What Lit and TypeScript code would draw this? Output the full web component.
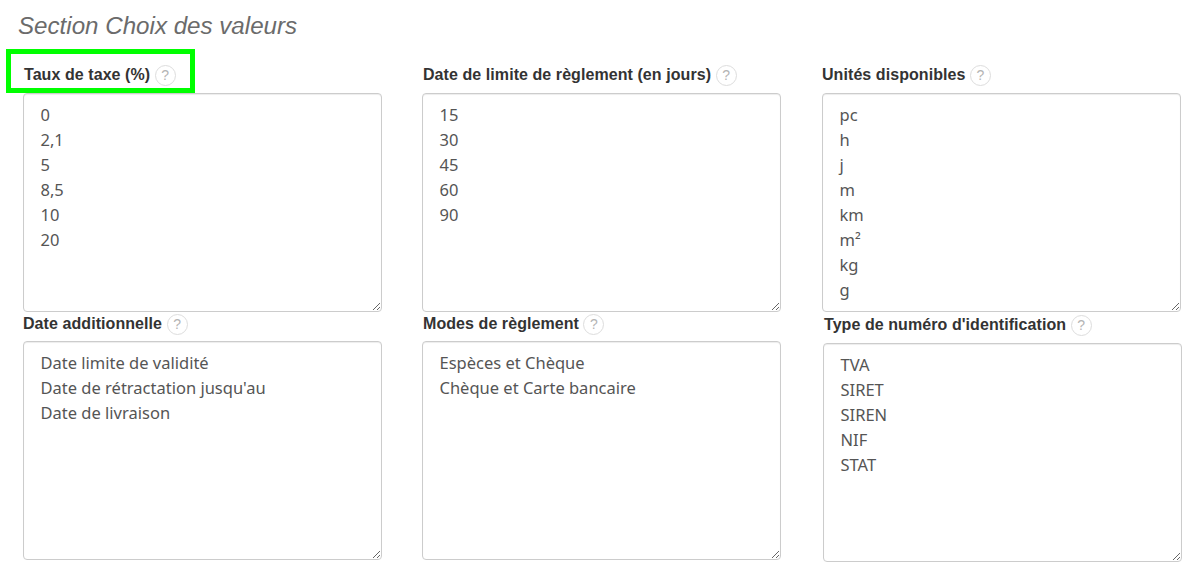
import { LitElement, html, css } from "lit";
import { customElement } from "lit/decorators.js";

const CELLS = [
  { label: "Taux de taxe (%)", value: "0\n2,1\n5\n8,5\n10\n20", cls: "c1" },
  { label: "Date de limite de règlement (en jours)", value: "15\n30\n45\n60\n90", cls: "c2" },
  { label: "Unités disponibles", value: "pc\nh\nj\nm\nkm\nm²\nkg\ng", cls: "c3" },
  { label: "Date additionnelle", value: "Date limite de validité\nDate de rétractation jusqu'au\nDate de livraison", cls: "c4" },
  { label: "Modes de règlement", value: "Espèces et Chèque\nChèque et Carte bancaire", cls: "c5" },
  { label: "Type de numéro d'identification", value: "TVA\nSIRET\nSIREN\nNIF\nSTAT", cls: "c6" },
];

@customElement("app-root")
export class AppRoot extends LitElement {
  static styles = css`
    :host {
      display: block;
      position: relative;
      width: 1200px;
      height: 573px;
      overflow: hidden;
      background: #fff;
      font-family: "Liberation Sans", Arial, sans-serif;
    }
    .page {
      padding: 13px 0 0 18px;
    }
    h2 {
      margin: 0;
      font-size: 24.15px;
      line-height: 26px;
      font-weight: 400;
      font-style: italic;
      color: #6b6b6b;
    }
    .grid {
      display: grid;
      grid-template-columns: 399px 400px 360px;
      grid-template-rows: 248px auto;
      margin: 25px 0 0 5px;
    }
    .cell {
      display: flex;
      flex-direction: column;
      gap: 7px;
      align-items: flex-start;
    }
    .head {
      display: flex;
      align-items: center;
      gap: 4.5px;
      height: 22px;
      font-size: 16px;
      letter-spacing: 0.07px;
      font-weight: 700;
      color: #333;
      white-space: nowrap;
    }
    .c1 .head,
    .c2 .head,
    .c5 .head {
      padding-left: 1px;
    }
    .c4 .head,
    .c5 .head {
      margin-top: 1px;
      margin-bottom: -1px;
    }
    .c6 {
      padding: 2px 0 0 1px;
    }
    .c6 .head {
      padding-left: 1px;
    }
    .help {
      box-sizing: border-box;
      width: 21px;
      height: 21px;
      border: 1px solid #ddd;
      border-radius: 50%;
      display: flex;
      align-items: center;
      justify-content: center;
      font-size: 14px;
      font-weight: 400;
      color: #b4b4b4;
    }
    textarea {
      box-sizing: border-box;
      display: block;
      width: 359px;
      height: 219px;
      margin: 0;
      padding: 8px 17px 9px 16.5px;
      border: 1px solid #ccc;
      border-radius: 4px;
      box-shadow: inset 0 1px 1px rgba(0, 0, 0, 0.075);
      font-family: "Noto Sans", "Open Sans", sans-serif;
      font-size: 16.5px;
      line-height: 25px;
      color: #555;
      background: #fff;
      outline: none;
      overflow: hidden;
      resize: both;
    }
    .mark {
      position: absolute;
      left: 6px;
      top: 49px;
      width: 189px;
      height: 44px;
      box-sizing: border-box;
      border: 5px solid #00ff00;
      pointer-events: none;
    }
  `;

  render() {
    return html`
      <div class="page">
        <h2>Section Choix des valeurs</h2>
        <div class="grid">
          ${CELLS.map(
            (c) => html`
              <div class="cell ${c.cls}">
                <div class="head"><span>${c.label}</span><span class="help">?</span></div>
                <textarea readonly .value=${c.value}></textarea>
              </div>
            `
          )}
        </div>
      </div>
      <div class="mark"></div>
    `;
  }
}
